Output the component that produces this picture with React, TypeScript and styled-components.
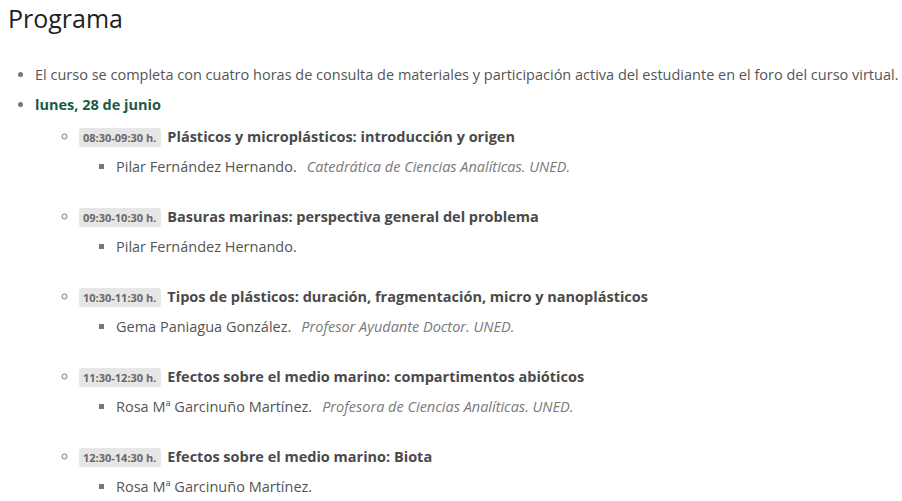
import styled, { createGlobalStyle } from "styled-components";

const Global = createGlobalStyle`
  body {
    margin: 0;
    padding: 0 0 0 8px;
    background: #ffffff;
    font-family: "Open Sans", "Liberation Sans", sans-serif;
    color: #555555;
  }
`;

const Title = styled.h2`
  margin: 0;
  padding-top: 2px;
  font-size: 25px;
  font-weight: 400;
  line-height: 32px;
  color: #1f1f1f;
`;

const List = styled.ul`
  margin: 31px 0 0;
  padding-left: 27px;
  list-style: disc;
  font-size: 14.5px;
  line-height: 20px;
  li::marker {
    color: #777;
  }
`;

const Item = styled.li<{ $single?: boolean }>`
  margin-bottom: 10px;
  white-space: ${(p) => (p.$single ? "nowrap" : "normal")};
`;

const DayTitle = styled.strong`
  color: #1a5a48;
  font-weight: 700;
`;

const Sessions = styled.ul`
  margin: 12px 0 0;
  padding-left: 44px;
  list-style: circle;
`;

const Session = styled.li`
  margin-bottom: 30px;
`;

const Time = styled.span`
  display: inline-block;
  background: #e6e6e6;
  border-radius: 3px;
  padding: 0 5px 0 4px;
  margin-right: 6px;
  font-size: 11px;
  font-weight: 700;
  line-height: 19px;
  color: #666;
`;

const Topic = styled.strong`
  font-weight: 700;
  color: #4a4a4a;
`;

const Speakers = styled.ul`
  margin: 10px 0 0;
  padding-left: 37px;
  list-style: square;
`;

const Role = styled.em`
  margin-left: 10px;
  color: #7a7a7a;
`;

type S = { time: string; topic: string; who: string; role?: string };

const sessions: S[] = [
  {
    time: "08:30-09:30 h.",
    topic: "Plásticos y microplásticos: introducción y origen",
    who: "Pilar Fernández Hernando.",
    role: "Catedrática de Ciencias Analíticas. UNED.",
  },
  {
    time: "09:30-10:30 h.",
    topic: "Basuras marinas: perspectiva general del problema",
    who: "Pilar Fernández Hernando.",
  },
  {
    time: "10:30-11:30 h.",
    topic: "Tipos de plásticos: duración, fragmentación, micro y nanoplásticos",
    who: "Gema Paniagua González.",
    role: "Profesor Ayudante Doctor. UNED.",
  },
  {
    time: "11:30-12:30 h.",
    topic: "Efectos sobre el medio marino: compartimentos abióticos",
    who: "Rosa Mª Garcinuño Martínez.",
    role: "Profesora de Ciencias Analíticas. UNED.",
  },
  {
    time: "12:30-14:30 h.",
    topic: "Efectos sobre el medio marino: Biota",
    who: "Rosa Mª Garcinuño Martínez.",
  },
];

export default function App() {
  return (
    <>
      <Global />
      <Title>Programa</Title>
      <List>
        <Item $single>
          El curso se completa con cuatro horas de consulta de materiales y participación activa del estudiante en el foro del curso virtual.
        </Item>
        <Item>
          <DayTitle>lunes, 28 de junio</DayTitle>
          <Sessions>
            {sessions.map((s) => (
              <Session key={s.time}>
                <Time>{s.time}</Time>
                <Topic>{s.topic}</Topic>
                <Speakers>
                  <li>
                    {s.who}
                    {s.role && <Role>{s.role}</Role>}
                  </li>
                </Speakers>
              </Session>
            ))}
          </Sessions>
        </Item>
      </List>
    </>
  );
}
